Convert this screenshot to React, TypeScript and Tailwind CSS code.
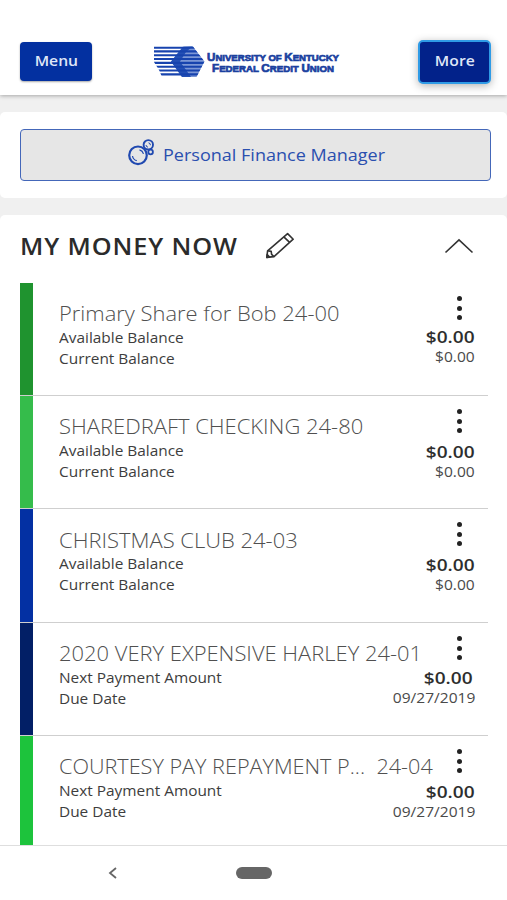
import { clsx } from "clsx";
import type { ReactNode } from "react";

type Account = {
  name: string;
  number: string;
  labels: [string, string];
  amount: string;
  detail: string;
  bar: string;
  row: string;
  nameClass: string;
  amountClass: string;
};

const balance: [string, string] = ["Available Balance", "Current Balance"];
const payment: [string, string] = ["Next Payment Amount", "Due Date"];

const accounts: Account[] = [
  {
    name: "Primary Share for Bob",
    number: "24-00",
    labels: balance,
    amount: "$0.00",
    detail: "$0.00",
    bar: "bg-[#1f932f]",
    row: "h-[113px] border-b",
    nameClass: "scale-x-[1.096]",
    amountClass: "mt-[-1px]",
  },
  {
    name: "SHAREDRAFT CHECKING",
    number: "24-80",
    labels: balance,
    amount: "$0.00",
    detail: "$0.00",
    bar: "bg-[#35bc4b]",
    row: "h-[113px] border-b",
    nameClass: "scale-x-[1.098]",
    amountClass: "mt-px",
  },
  {
    name: "CHRISTMAS CLUB",
    number: "24-03",
    labels: balance,
    amount: "$0.00",
    detail: "$0.00",
    bar: "bg-[#0330a3]",
    row: "h-[114px] border-b",
    nameClass: "relative top-px scale-x-[1.098]",
    amountClass: "mt-px",
  },
  {
    name: "2020 VERY EXPENSIVE HARLEY",
    number: "24-01",
    labels: payment,
    amount: "$0.00",
    detail: "09/27/2019",
    bar: "bg-[#021f66]",
    row: "h-[113px] border-b",
    nameClass: "scale-x-[1.096]",
    amountClass: "pr-[2px]",
  },
  {
    name: "COURTESY PAY REPAYMENT P...",
    number: " 24-04",
    labels: payment,
    amount: "$0.00",
    detail: "09/27/2019",
    bar: "bg-[#1dc33c]",
    row: "h-[110px]",
    nameClass: "scale-x-[1.081]",
    amountClass: "mt-px",
  },
];

function Logo() {
  return (
    <svg width="188" height="36" viewBox="0 0 188 36" className="shrink-0">
      <defs>
        <clipPath id="flag">
          <path d="M1 2.5H40L51.5 17.5L43.5 33H9L6 26L1 18Z" />
        </clipPath>
      </defs>
      <g clipPath="url(#flag)">
        <path d="M31 2.5L18 17.5L29 33H44L52 17.5L40 2Z" fill="#7c97d6" />
        <path d="M30 2.5L18 17.5L29 33H38L27 17.5L33 8L40 2Z" fill="#2450b5" />
        <path
          d="M0 3.6H52M0 7.4H52M0 11.2H52M0 15H52M0 18.9H52M0 22.7H52M0 26.5H52M0 30.4H52"
          stroke="#1743ae"
          strokeWidth="2.1"
        />
      </g>
      <g
        fill="#1a3f9f"
        stroke="#1a3f9f"
        strokeWidth="0.7"
        fontFamily="Liberation Sans, sans-serif"
        fontWeight="700"
        fontSize="9.5"
      >
        <text x="54" y="17" textLength="132" lengthAdjust="spacingAndGlyphs">
          <tspan fontSize="11.5">U</tspan>NIVERSITY OF <tspan fontSize="11.5">K</tspan>ENTUCKY
        </text>
        <text x="59" y="28.3" textLength="122" lengthAdjust="spacingAndGlyphs">
          <tspan fontSize="11.5">F</tspan>EDERAL <tspan fontSize="11.5">C</tspan>REDIT <tspan fontSize="11.5">U</tspan>NION
        </text>
      </g>
    </svg>
  );
}

function BubblesIcon() {
  return (
    <svg width="28" height="28" viewBox="0 0 28 28" fill="none" stroke="#2049b0">
      <circle cx="11" cy="16.3" r="8.8" strokeWidth="2.2" />
      <path d="M5.5 17a5.8 5.8 0 0 0 4.3 4.7M12.5 10.9a5.8 5.8 0 0 1 4 4" strokeWidth="1.2" />
      <circle cx="21.3" cy="5.8" r="4.7" strokeWidth="1.9" />
      <path d="M21.5 3.8a2.3 2.3 0 0 1 1.9 2.4M19 6a2.3 2.3 0 0 0 2 2.2" strokeWidth="1" />
      <circle cx="23.6" cy="13" r="2.3" strokeWidth="1.8" />
    </svg>
  );
}

function PencilIcon() {
  return (
    <svg
      width="30"
      height="28"
      viewBox="0 0 30 28"
      fill="none"
      stroke="#333"
      strokeWidth="1.6"
      strokeLinejoin="round"
    >
      <path d="M1.8 25.4L2.6 18.8L22.6 1.6L28.2 7.2L9 24.6Z" />
      <path d="M2.6 18.8L6.2 19.4L6.6 22.4L9 24.6M18.8 4.8L24.6 10.4" />
      <path d="M1.8 25.4L2.2 22.6L4.6 25Z" fill="#333" />
    </svg>
  );
}

function Wide({ className, children }: { className?: string; children: ReactNode }) {
  return <span className={clsx("inline-block whitespace-pre", className)}>{children}</span>;
}

function AccountRow({ account }: { account: Account }) {
  return (
    <li className={clsx("flex border-[#cfcfcf]", account.row)}>
      <div className={clsx("w-[13px] shrink-0", account.bar)} />
      <div className="flex flex-1 justify-between pl-[26px] pr-[13px]">
        <div className="w-[330px] pt-[17px] text-sm leading-[20.5px] text-[#3d3d3d]">
          <h3 className="text-xl leading-[28px] font-light text-[#505050]">
            <Wide className={clsx("origin-left", account.nameClass)}>
              {account.name} {account.number}
            </Wide>
          </h3>
          {account.labels.map((label) => (
            <p key={label}>
              <Wide className="origin-left scale-x-[1.1]">{label}</Wide>
            </p>
          ))}
        </div>
        <div className="flex flex-col items-end pt-[12px]">
          <button className="mr-[13px] flex h-[26px] w-[5px] flex-col items-center justify-between py-px">
            <span className="size-[5px] rounded-full bg-[#222]" />
            <span className="size-[5px] rounded-full bg-[#222]" />
            <span className="size-[5px] rounded-full bg-[#222]" />
          </button>
          <p
            className={clsx(
              "pt-[7px] text-[17px] leading-[20px] font-semibold text-[#2e2e2e]",
              account.amountClass,
            )}
          >
            <Wide className="origin-right scale-x-[1.12]">{account.amount}</Wide>
          </p>
          <p className="text-sm leading-[20px] text-[#4a4a4a]">
            <Wide className="origin-right scale-x-[1.11]">{account.detail}</Wide>
          </p>
        </div>
      </div>
    </li>
  );
}

export default function App() {
  return (
    <div className="flex h-[900px] w-[507px] flex-col overflow-hidden bg-[#f0f0f0] font-['Open_Sans',sans-serif]">
      <header className="relative flex h-[95px] shrink-0 items-start bg-white pr-[16px] pl-[20px] pt-[42px] shadow-[0_1px_4px_rgba(0,0,0,0.3)]">
        <button className="h-[39px] w-[72px] rounded-[4px] bg-[#0330a0] pb-[2px] text-sm font-semibold text-[#dfe6f7] shadow-[0_1px_2px_rgba(0,0,0,0.35)]">
          <Wide className="scale-x-[1.12]">Menu</Wide>
        </button>
        <div className="mt-[2px] ml-[61px]">
          <Logo />
        </div>
        <button className="mt-[-2px] ml-auto h-[44px] w-[73px] rounded-[5px] border-2 border-[#2f9be6] bg-[#02228a] pb-[2px] text-sm font-semibold text-[#dfe6f7] shadow-[0_2px_8px_rgba(0,0,0,0.3)]">
          <Wide className="scale-x-[1.12]">More</Wide>
        </button>
      </header>

      <section className="mt-[17px] h-[86px] shrink-0 rounded-[5px] bg-white pt-[17px] pr-[16px] pl-[20px]">
        <button className="flex h-[52px] w-full items-center rounded-[4px] border-[1.5px] border-[#4467b9] bg-[#e6e6e6] pl-[106px] text-[#2a4faf]">
          <span className="-mt-[4px]">
            <BubblesIcon />
          </span>
          <Wide className="ml-[8px] origin-left scale-x-[1.06] text-[17px]">
            Personal Finance Manager
          </Wide>
        </button>
      </section>

      <section className="mt-[17px] h-[630px] shrink-0 overflow-hidden rounded-t-[5px] bg-white">
        <div className="flex h-[68px] items-center pr-[33px] pb-[6px] pl-[20px]">
          <h2 className="w-[245px] text-[23px] font-semibold text-[#2b2b2b]">
            <Wide className="origin-left scale-x-[1.1] tracking-[0.035em]">MY MONEY NOW</Wide>
          </h2>
          <PencilIcon />
          <svg
            width="30"
            height="16"
            viewBox="0 0 30 16"
            fill="none"
            stroke="#333"
            strokeWidth="1.6"
            className="ml-auto"
          >
            <path d="M1.5 14.5L15 1.8L28.5 14.5" />
          </svg>
        </div>
        <ul className="pr-[19px] pl-[20px]">
          {accounts.map((account) => (
            <AccountRow key={account.name} account={account} />
          ))}
        </ul>
      </section>

      <nav className="flex flex-1 items-start border-t border-[#dedede] bg-white pt-[21px] pl-[108px]">
        <svg width="10" height="12" viewBox="0 0 10 12" fill="none" stroke="#666" strokeWidth="1.8">
          <path d="M8 1L2 6L8 11" />
        </svg>
        <div className="ml-[118px] h-[12px] w-[36px] rounded-full bg-[#666]" />
      </nav>
    </div>
  );
}
